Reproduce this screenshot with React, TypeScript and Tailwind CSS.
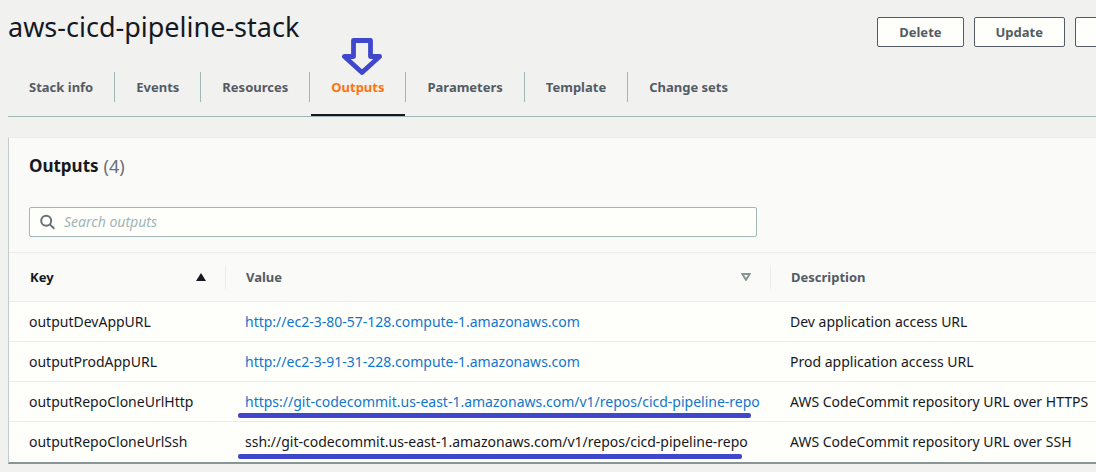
import React from "react";

const tabs = ["Stack info", "Events", "Resources", "Outputs", "Parameters", "Template", "Change sets"];

type Output = {
  name: string;
  value: string;
  description: string;
  link: boolean;
  mark?: string;
};

const outputs: Output[] = [
  { name: "outputDevAppURL", value: "http://ec2-3-80-57-128.compute-1.amazonaws.com", description: "Dev application access URL", link: true },
  { name: "outputProdAppURL", value: "http://ec2-3-91-31-228.compute-1.amazonaws.com", description: "Prod application access URL", link: true },
  {
    name: "outputRepoCloneUrlHttp",
    value: "https://git-codecommit.us-east-1.amazonaws.com/v1/repos/cicd-pipeline-repo",
    description: "AWS CodeCommit repository URL over HTTPS",
    link: true,
    mark: "left-3 top-[31px] w-[513px]",
  },
  {
    name: "outputRepoCloneUrlSsh",
    value: "ssh://git-codecommit.us-east-1.amazonaws.com/v1/repos/cicd-pipeline-repo",
    description: "AWS CodeCommit repository URL over SSH",
    link: false,
    mark: "left-3 top-8 w-[504px]",
  },
];

function ActionButton({ children }: { children: React.ReactNode }) {
  return (
    <button type="button" className="h-[30px] rounded-xs border border-[#545b64] bg-[#fefefb] px-[21px] text-[13px] font-bold text-[#545b64]">
      {children}
    </button>
  );
}

function ArrowMark() {
  return (
    <svg className="absolute -top-[34px] left-8 h-[38px] w-10" viewBox="0 0 40 38" fill="none" aria-hidden="true">
      <path d="M11.500 2.500H28.500V18.500H37.600L20 34.500L2.400 18.500H11.500Z" stroke="#3f48cc" strokeWidth="4.800" strokeLinejoin="round" />
    </svg>
  );
}

export default function App() {
  return (
    <div className="min-h-screen overflow-hidden bg-[#f1f1f0] pb-[10px] pl-2 font-['Noto_Sans',sans-serif] text-sm leading-5 text-[#16191f]">
      <header className="flex h-[54px] items-start justify-between">
        <h1 className="pt-2 text-[27px] leading-[38px]">aws-cicd-pipeline-stack</h1>
        <div className="-mr-3 flex shrink-0 gap-[10px] pt-[17px]">
          <ActionButton>Delete</ActionButton>
          <ActionButton>Update</ActionButton>
          <button type="button" aria-label="More" className="h-[30px] w-[33px] rounded-xs border border-[#545b64] bg-[#fefefb]" />
        </div>
      </header>

      <nav className="mt-[18px] flex border-b border-[#a2b5b7]">
        {tabs.map((tab, i) => {
          const active = tab === "Outputs";
          return (
            <a
              key={tab}
              href="#"
              className={`relative flex h-11 flex-col text-[13px] font-bold whitespace-nowrap ${active ? "text-[#ff7311]" : "text-[#545b64]"}`}
            >
              {active && <ArrowMark />}
              <span className={`flex h-[30px] items-center px-[21px] ${i < tabs.length - 1 ? "border-r border-[#a2b5b7]" : ""}`}>{tab}</span>
              {active && <span className="mt-auto mr-px ml-px h-0.5 bg-[#16191f]" />}
            </a>
          );
        })}
      </nav>

      <main className="mt-5 border-t border-b-2 border-l border-t-[#eaeded] border-b-[#879596] border-l-[#c3cccd] bg-[#fafaf8]">
        <div className="px-5 pt-4 pb-[15px]">
          <h2 className="flex h-6 items-center gap-[5px] text-[17px] font-bold">
            Outputs <span className="text-lg leading-6 font-normal text-[#687078]">(4)</span>
          </h2>
          <label className="mt-[29px] flex h-[30px] w-[728px] max-w-full items-center gap-2 rounded-xs border border-[#a2b5b7] bg-[#fefefb] pl-[10px]">
            <svg className="h-4 w-4 shrink-0" viewBox="0 0 16 16" fill="none" stroke="#687078" strokeWidth="2" aria-hidden="true">
              <circle cx="6.200" cy="6.800" r="5" />
              <path d="M9.800 10.400L14.300 14.800" />
            </svg>
            <input
              type="text"
              aria-label="Search outputs"
              placeholder="Search outputs"
              className="min-w-0 flex-1 bg-transparent outline-none placeholder:text-[#a2b5b7] placeholder:italic"
            />
          </label>
        </div>

        <table className="w-full table-fixed border-collapse text-left">
          <colgroup>
            <col className="w-[217px]" />
            <col className="w-[545px]" />
            <col />
          </colgroup>
          <thead>
            <tr className="h-[49px] border-y border-[#eaeded] text-[13px]">
              <th className="p-0 font-bold">
                <div className="flex h-6 items-center justify-between border-r border-[#eaeded] pr-[19px] pl-[21px]">
                  Key
                  <svg className="h-2 w-[10px]" viewBox="0 0 10 8" aria-hidden="true">
                    <path d="M5 0L10 8H0Z" fill="#16191f" />
                  </svg>
                </div>
              </th>
              <th className="p-0 font-bold text-[#545b64]">
                <div className="flex h-6 items-center justify-between border-r border-[#eaeded] pr-[19px] pl-5">
                  Value
                  <svg className="h-2 w-[10px]" viewBox="0 0 10 8" fill="none" aria-hidden="true">
                    <path d="M1.300 1H8.700L5 6.800Z" stroke="#879596" strokeWidth="2" />
                  </svg>
                </div>
              </th>
              <th className="py-0 pr-0 pl-5 font-bold text-[#545b64]">Description</th>
            </tr>
          </thead>
          <tbody className="bg-[#fefefb]">
            {outputs.map((o) => (
              <tr key={o.name} className="h-10 border-b border-[#eaeded] last:border-b-0">
                <td className="py-0 pr-0 pl-5">{o.name}</td>
                <td className="relative py-0 pr-0 pl-[19px] whitespace-nowrap">
                  {o.link ? (
                    <a href={o.value} className="text-[#1176cc]">
                      {o.value}
                    </a>
                  ) : (
                    o.value
                  )}
                  {o.mark && <span className={`absolute h-[5px] rounded-xs bg-[#3f48cc] ${o.mark}`} />}
                </td>
                <td className="py-0 pr-0 pl-[19px] whitespace-nowrap">{o.description}</td>
              </tr>
            ))}
          </tbody>
        </table>
      </main>
    </div>
  );
}
